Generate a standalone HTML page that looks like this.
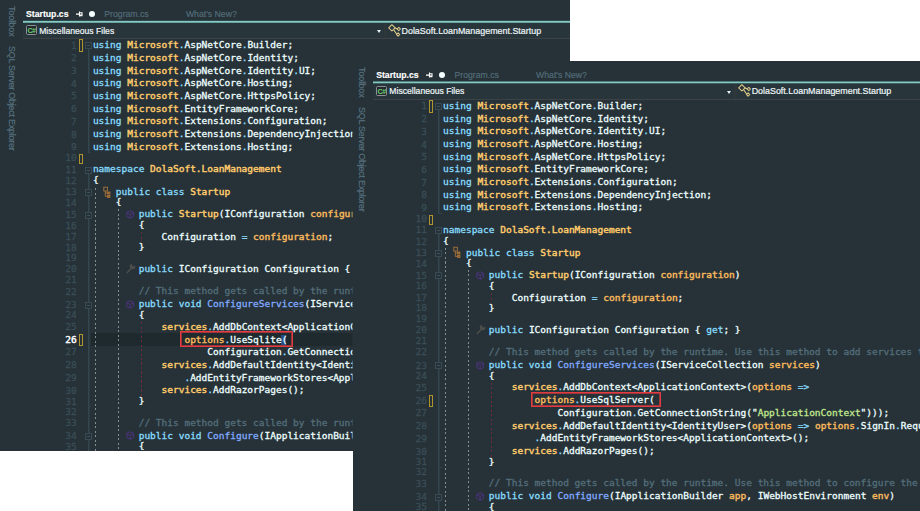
<!DOCTYPE html>
<html lang="en"><head><meta charset="utf-8"><title>Startup.cs</title>
<style>
html,body{margin:0;padding:0}
body{width:920px;height:511px;background:#fff;position:relative;overflow:hidden;font-family:"Liberation Sans",sans-serif}
.pane{position:absolute;background:#263238;overflow:hidden}
.pane>*{position:absolute}
.vt{left:0;width:0;height:0;color:#587280;-webkit-text-stroke:0.15px;font-size:9px;white-space:nowrap;transform:translate(6.5px,0) rotate(90deg);transform-origin:0 0;line-height:9px;margin-top:0}
.vt{transform:translate(16px,0) rotate(90deg);font-size:8.9px}
.tab{-webkit-text-stroke:0.15px;top:8.5px;font-size:8.7px;line-height:11px;color:#546e7a;white-space:nowrap}
.tab.act{color:#fff;font-weight:bold;font-size:8.7px;-webkit-text-stroke:0.15px}
.dot{width:6.2px;height:6.2px;border-radius:50%;background:#f4ffff}
.teal3{position:absolute;height:3px;background:linear-gradient(to bottom,rgba(128,203,196,var(--a)) 0,rgba(128,203,196,var(--a)) 1px,#80cbc4 1px,#80cbc4 2px,rgba(128,203,196,var(--b)) 2px,rgba(128,203,196,var(--b)) 3px)}
.nav{height:15px;background:#28353b;border-bottom:1px solid #3c4246;box-sizing:content-box}
.cs{width:9px;height:7.8px;border:1px solid #8b9194;border-radius:1.5px;background:#23292d;box-sizing:content-box}
.cs span{position:absolute;left:0.4px;top:1px;font:bold 7.2px "Liberation Sans",sans-serif;color:#6fd274;line-height:8px;letter-spacing:-0.5px}
.navt{-webkit-text-stroke:0.2px;top:25.5px;font-size:8.6px;line-height:11px;color:#eef6f8;white-space:nowrap}
.arrow{width:0;height:0;border-left:2.6px solid transparent;border-right:2.6px solid transparent;border-top:3px solid #e8f0f2}
.sep{width:2.6px;height:15px;background:#30373b}
.cur{background:#1f2a2f}
.ol{width:2px;background:linear-gradient(to right,#34464e 0,#34464e 1px,rgba(52,70,78,.45) 1px,rgba(52,70,78,.45) 2px)}
.olh{width:3.4px;height:1px;background:#31424a}
.cb{width:5px;height:5px;border:1px solid #384b54;background:#263238;box-sizing:content-box}
.cb i{position:absolute;left:1px;top:2px;width:3px;height:1px;background:#3f535c}
.ym{width:2px;border:1px solid #b0952f;box-sizing:content-box}
.g{width:1px;background:repeating-linear-gradient(to bottom,#838d91 0,#838d91 2px,transparent 2px,transparent 4.5px)}
.g.r{background:repeating-linear-gradient(to bottom,#6e2c3a 0,#6e2c3a 2px,transparent 2px,transparent 4.5px)}
.ln,.cd{font-family:"DejaVu Sans Mono","Liberation Mono",monospace;font-size:9.5px;line-height:12px;white-space:pre;-webkit-text-stroke:0.3px}
.ln{left:40px;width:36.8px;text-align:right;color:#3a4d56}
.ln.cl{color:#fff;-webkit-text-stroke:0.45px}
.cd{left:92.9px;color:#eeffff}
.k{color:#89ddff}.t{color:#ffcb6b;-webkit-text-stroke:0.42px}.w{color:#eeffff}.p{color:#89ddff}.c{color:#546e7a}.m{color:#82aaff}.o{color:#f9b95c;-webkit-text-stroke:0.42px}.s{color:#c3e88d}
.red{border:1px solid #e23b40;box-shadow:inset 0 0 0 1px rgba(226,59,64,.65);box-sizing:border-box}
.ic{overflow:visible}
</style></head>
<body>
<div class="pane" style="left:0px;top:0px;width:570px;height:451px">
<div class="vt" style="top:6px">Toolbox</div>
<div class="vt" style="top:46.3px;letter-spacing:-0.2px">SQL Server Object Explorer</div>
<div class="tab act" style="left:26px;top:8.5px">Startup.cs</div>
<svg class="pin" style="left:76px;top:11px" width="7" height="6" viewBox="0 0 7 6"><path d="M0 3.1H3.4M3.5 0.6V5.5M3.5 1.7H6V4H3.5M3.5 4.7H6.4" fill="none" stroke="#fff" stroke-width="1.1"/></svg>
<div class="dot" style="left:89.1px;top:11.2px"></div>
<div class="tab" style="left:104.3px;top:8.5px">Program.cs</div>
<div class="tab" style="left:185.9px;top:8.5px">What's New?</div>
<div class="nav" style="left:23px;top:23px;width:547px"></div>
<div class="cs" style="left:26px;top:25px"><span>C#</span></div>
<div class="navt" style="left:39.2px">Miscellaneous Files</div>
<div class="arrow" style="left:376.6px;top:30px"></div>
<div class="sep" style="left:383.8px;top:23px"></div>
<svg class="ic" style="left:388px;top:23.5px" width="13" height="13" viewBox="0 0 13 13"><g fill="none" stroke="#e1cd8c" stroke-width="1.05" stroke-linejoin="round"><path d="M3.9 0.7L7.1 3.8L3.9 7L0.7 3.8Z"/><path d="M10.8 3.3L12.5 5L10.8 6.7L9.1 5Z"/><path d="M10.1 8.8L11.8 10.5L10.1 12.2L8.4 10.5Z"/><path d="M7.1 3.8L9.1 5M5.6 5.6L8.6 10"/></g></svg>
<div class="navt" style="left:401.5px;font-size:8.92px">DolaSoft.LoanManagement.Startup</div>
<div class="cur" style="left:91px;top:333.4px;width:479px;height:12.2px"></div>
<div style="left:281px;top:335px;width:5px;height:10px;background:#234f86"></div>
<div class="ol" style="left:88px;top:48.5px;height:104.69999999999999px"></div>
<div class="olh" style="left:88px;top:152.2px"></div>
<div class="ol" style="left:88px;top:172.5px;height:278.5px"></div>
<div class="olh" style="left:88px;top:252.6px"></div>
<div class="olh" style="left:88px;top:406px"></div>
<div class="cb" style="left:84.7px;top:42.40px"><i></i></div>
<div class="cb" style="left:84.7px;top:166.55px"><i></i></div>
<div class="cb" style="left:84.7px;top:189.20px"><i></i></div>
<div class="cb" style="left:84.7px;top:211.70px"><i></i></div>
<div class="cb" style="left:84.7px;top:301.60px"><i></i></div>
<div class="cb" style="left:84.7px;top:432.90px"><i></i></div>
<div class="ym" style="left:79px;top:39px;height:11px"></div>
<div class="ym" style="left:79px;top:154px;height:8px"></div>
<div class="ym" style="left:79px;top:334px;height:10px"></div>
<div class="g" style="left:95px;top:187.5px;height:263.5px"></div>
<div class="g" style="left:118px;top:209px;height:242px"></div>
<div class="g r" style="left:141px;top:232px;height:10px"></div>
<div class="g r" style="left:141px;top:322px;height:74.5px"></div>
<svg class="ic" style="left:102.5px;top:186.50px" width="9" height="12" viewBox="0 0 9 12"><g fill="none" stroke="#a9743a" stroke-width="0.9"><rect x="0.8" y="0.2" width="3.6" height="3.8"/><rect x="4.6" y="5" width="2.3" height="2" fill="#8a5f30"/><rect x="4.6" y="8.4" width="2.3" height="2" fill="#8a5f30"/><path d="M2.3 4V9.4H4.6M2.3 6H4.6"/></g></svg>
<svg class="ic" style="left:125.6px;top:210.00px" width="8.2" height="9" viewBox="0 0 9 10"><g fill="none" stroke="#523288" stroke-width="1" stroke-linejoin="round"><path d="M4.5 0.8L8.2 2.8V7L4.5 9.2L0.8 7V2.8Z"/><path d="M0.8 2.8L4.5 5L8.2 2.8M4.5 5V9.2"/></g></svg>
<svg class="ic" style="left:126px;top:263.40px" width="10.4" height="10.8" viewBox="0 0 11 12"><path d="M1.2 10.6L6 5.6" stroke="#4c4e4b" stroke-width="1.7" stroke-linecap="round" fill="none"/><path d="M10 3A3.1 3.1 0 1 1 6.4 0.8L6.6 3L8.2 4Z" fill="#4c4e4b"/></svg>
<svg class="ic" style="left:125.6px;top:299.90px" width="8.2" height="9" viewBox="0 0 9 10"><g fill="none" stroke="#523288" stroke-width="1" stroke-linejoin="round"><path d="M4.5 0.8L8.2 2.8V7L4.5 9.2L0.8 7V2.8Z"/><path d="M0.8 2.8L4.5 5L8.2 2.8M4.5 5V9.2"/></g></svg>
<svg class="ic" style="left:125.6px;top:431.20px" width="8.2" height="9" viewBox="0 0 9 10"><g fill="none" stroke="#523288" stroke-width="1" stroke-linejoin="round"><path d="M4.5 0.8L8.2 2.8V7L4.5 9.2L0.8 7V2.8Z"/><path d="M0.8 2.8L4.5 5L8.2 2.8M4.5 5V9.2"/></g></svg>
<div class="ln" style="top:40.00px">1</div>
<div class="cd" style="top:39.00px"><span class="k">using</span> <span class="t">Microsoft</span><span class="p">.</span><span class="w">AspNetCore</span><span class="p">.</span><span class="w">Builder</span><span class="w">;</span></div>
<div class="ln" style="top:52.00px">2</div>
<div class="cd" style="top:52.00px"><span class="k">using</span> <span class="t">Microsoft</span><span class="p">.</span><span class="w">AspNetCore</span><span class="p">.</span><span class="w">Identity</span><span class="w">;</span></div>
<div class="ln" style="top:65.00px">3</div>
<div class="cd" style="top:65.00px"><span class="k">using</span> <span class="t">Microsoft</span><span class="p">.</span><span class="w">AspNetCore</span><span class="p">.</span><span class="w">Identity</span><span class="p">.</span><span class="w">UI</span><span class="w">;</span></div>
<div class="ln" style="top:78.00px">4</div>
<div class="cd" style="top:77.00px"><span class="k">using</span> <span class="t">Microsoft</span><span class="p">.</span><span class="w">AspNetCore</span><span class="p">.</span><span class="w">Hosting</span><span class="w">;</span></div>
<div class="ln" style="top:90.00px">5</div>
<div class="cd" style="top:90.00px"><span class="k">using</span> <span class="t">Microsoft</span><span class="p">.</span><span class="w">AspNetCore</span><span class="p">.</span><span class="w">HttpsPolicy</span><span class="w">;</span></div>
<div class="ln" style="top:103.00px">6</div>
<div class="cd" style="top:103.00px"><span class="k">using</span> <span class="t">Microsoft</span><span class="p">.</span><span class="w">EntityFrameworkCore</span><span class="w">;</span></div>
<div class="ln" style="top:116.00px">7</div>
<div class="cd" style="top:115.00px"><span class="k">using</span> <span class="t">Microsoft</span><span class="p">.</span><span class="w">Extensions</span><span class="p">.</span><span class="w">Configuration</span><span class="w">;</span></div>
<div class="ln" style="top:129.00px">8</div>
<div class="cd" style="top:128.00px"><span class="k">using</span> <span class="t">Microsoft</span><span class="p">.</span><span class="w">Extensions</span><span class="p">.</span><span class="w">DependencyInjection</span><span class="w">;</span></div>
<div class="ln" style="top:141.00px">9</div>
<div class="cd" style="top:141.00px"><span class="k">using</span> <span class="t">Microsoft</span><span class="p">.</span><span class="w">Extensions</span><span class="p">.</span><span class="w">Hosting</span><span class="w">;</span></div>
<div class="ln" style="top:152.00px">10</div>
<div class="ln" style="top:164.00px">11</div>
<div class="cd" style="top:163.00px"><span class="k">namespace</span> <span class="t">DolaSoft.LoanManagement</span></div>
<div class="ln" style="top:175.00px">12</div>
<div class="cd" style="top:174.00px"><span class="w">{</span></div>
<div class="ln" style="top:186.00px">13</div>
<div class="cd" style="top:186.00px">    <span class="k">public class</span> <span class="t">Startup</span></div>
<div class="ln" style="top:197.00px">14</div>
<div class="cd" style="top:196.00px">    <span class="w">{</span></div>
<div class="ln" style="top:209.00px">15</div>
<div class="cd" style="top:208.00px">        <span class="k">public</span> <span class="t">Startup</span><span class="w">(IConfiguration</span> <span class="o">configuration</span><span class="w">)</span></div>
<div class="ln" style="top:220.00px">16</div>
<div class="cd" style="top:219.00px">        <span class="w">{</span></div>
<div class="ln" style="top:231.00px">17</div>
<div class="cd" style="top:231.00px">            <span class="w">Configuration</span> <span class="k">=</span> <span class="o">configuration</span><span class="w">;</span></div>
<div class="ln" style="top:242.00px">18</div>
<div class="cd" style="top:241.00px">        <span class="w">}</span></div>
<div class="ln" style="top:252.00px">19</div>
<div class="ln" style="top:263.00px">20</div>
<div class="cd" style="top:263.00px">        <span class="k">public</span> <span class="w">IConfiguration Configuration {</span> <span class="k">get</span><span class="w">; }</span></div>
<div class="ln" style="top:274.00px">21</div>
<div class="ln" style="top:286.00px">22</div>
<div class="cd" style="top:285.00px">        <span class="c">// This method gets called by the runtime. Use this method to add services to the container.</span></div>
<div class="ln" style="top:299.00px">23</div>
<div class="cd" style="top:298.00px">        <span class="k">public void</span> <span class="m">ConfigureServices</span><span class="w">(IServiceCollection</span> <span class="o">services</span><span class="w">)</span></div>
<div class="ln" style="top:309.00px">24</div>
<div class="cd" style="top:309.00px">        <span class="w">{</span></div>
<div class="ln" style="top:321.00px">25</div>
<div class="cd" style="top:321.00px">            <span class="t">services</span><span class="p">.</span><span class="w">AddDbContext&lt;ApplicationContext&gt;(</span><span class="o">options</span> <span class="k">=&gt;</span></div>
<div class="ln cl" style="top:334.00px">26</div>
<div class="cd" style="top:334.00px">                <span class="o">options</span><span class="p">.</span><span class="w">UseSqlite(</span></div>
<div class="ln" style="top:346.00px">27</div>
<div class="cd" style="top:346.00px">                    <span class="w">Configuration</span><span class="p">.</span><span class="w">GetConnectionString(</span><span class="w">"</span><span class="s">ApplicationContext</span><span class="w">")));</span></div>
<div class="ln" style="top:359.00px">28</div>
<div class="cd" style="top:359.00px">            <span class="t">services</span><span class="p">.</span><span class="w">AddDefaultIdentity&lt;IdentityUser&gt;(</span><span class="o">options</span> <span class="k">=&gt;</span> <span class="o">options</span><span class="p">.</span><span class="w">SignIn</span><span class="p">.</span><span class="w">RequireConfirmedAccount</span> <span class="k">=</span> <span class="k">true</span><span class="w">)</span></div>
<div class="ln" style="top:372.00px">29</div>
<div class="cd" style="top:372.00px">                <span class="p">.</span><span class="w">AddEntityFrameworkStores&lt;ApplicationContext&gt;();</span></div>
<div class="ln" style="top:385.00px">30</div>
<div class="cd" style="top:384.00px">            <span class="t">services</span><span class="p">.</span><span class="w">AddRazorPages();</span></div>
<div class="ln" style="top:396.00px">31</div>
<div class="cd" style="top:395.00px">        <span class="w">}</span></div>
<div class="ln" style="top:406.00px">32</div>
<div class="ln" style="top:417.00px">33</div>
<div class="cd" style="top:417.00px">        <span class="c">// This method gets called by the runtime. Use this method to configure the HTTP request pipeline.</span></div>
<div class="ln" style="top:430.00px">34</div>
<div class="cd" style="top:430.00px">        <span class="k">public void</span> <span class="m">Configure</span><span class="w">(IApplicationBuilder</span> <span class="o">app</span><span class="w">, IWebHostEnvironment</span> <span class="o">env</span><span class="w">)</span></div>
<div class="ln" style="top:441.00px">35</div>
<div class="cd" style="top:440.00px">        <span class="w">{</span></div>
<div class="red" style="left:180px;top:331px;width:112.5px;height:16px"></div>
</div>
<div class="teal3" style="left:23px;top:20px;width:547px;--a:.15;--b:.75"></div>
<div style="position:absolute;left:352px;top:61px;width:1px;height:390px;background:#263238;opacity:.5"></div>
<div style="position:absolute;left:353px;top:61px;width:567px;height:450px;overflow:hidden;background:#263238">
<div class="pane" style="left:-2.85px;top:-0.25px;width:570px;height:451px">
<div class="vt" style="top:6px">Toolbox</div>
<div class="vt" style="top:46.3px;letter-spacing:-0.2px">SQL Server Object Explorer</div>
<div class="tab act" style="left:26px;top:9.1px">Startup.cs</div>
<svg class="pin" style="left:76px;top:11px" width="7" height="6" viewBox="0 0 7 6"><path d="M0 3.1H3.4M3.5 0.6V5.5M3.5 1.7H6V4H3.5M3.5 4.7H6.4" fill="none" stroke="#fff" stroke-width="1.1"/></svg>
<div class="dot" style="left:89.1px;top:11.2px"></div>
<div class="tab" style="left:104.3px;top:9.1px">Program.cs</div>
<div class="tab" style="left:185.9px;top:9.1px">What's New?</div>
<div class="nav" style="left:23px;top:23px;width:547px"></div>
<div class="cs" style="left:26px;top:25px"><span>C#</span></div>
<div class="navt" style="left:39.2px">Miscellaneous Files</div>
<div class="arrow" style="left:376.6px;top:30px"></div>
<div class="sep" style="left:383.8px;top:23px"></div>
<svg class="ic" style="left:388px;top:23.5px" width="13" height="13" viewBox="0 0 13 13"><g fill="none" stroke="#e1cd8c" stroke-width="1.05" stroke-linejoin="round"><path d="M3.9 0.7L7.1 3.8L3.9 7L0.7 3.8Z"/><path d="M10.8 3.3L12.5 5L10.8 6.7L9.1 5Z"/><path d="M10.1 8.8L11.8 10.5L10.1 12.2L8.4 10.5Z"/><path d="M7.1 3.8L9.1 5M5.6 5.6L8.6 10"/></g></svg>
<div class="navt" style="left:401.5px;font-size:8.92px">DolaSoft.LoanManagement.Startup</div>
<div class="ol" style="left:88px;top:48.5px;height:104.69999999999999px"></div>
<div class="olh" style="left:88px;top:152.2px"></div>
<div class="ol" style="left:88px;top:172.5px;height:278.5px"></div>
<div class="olh" style="left:88px;top:252.6px"></div>
<div class="olh" style="left:88px;top:406px"></div>
<div class="cb" style="left:84.7px;top:42.40px"><i></i></div>
<div class="cb" style="left:84.7px;top:166.55px"><i></i></div>
<div class="cb" style="left:84.7px;top:189.20px"><i></i></div>
<div class="cb" style="left:84.7px;top:211.70px"><i></i></div>
<div class="cb" style="left:84.7px;top:301.60px"><i></i></div>
<div class="cb" style="left:84.7px;top:432.90px"><i></i></div>
<div class="ym" style="left:79px;top:39px;height:11px"></div>
<div class="ym" style="left:79px;top:154px;height:8px"></div>
<div class="ym" style="left:79px;top:334px;height:10px"></div>
<div class="g" style="left:95px;top:187.5px;height:263.5px"></div>
<div class="g" style="left:118px;top:209px;height:242px"></div>
<div class="g r" style="left:141px;top:232px;height:10px"></div>
<div class="g r" style="left:141px;top:322px;height:74.5px"></div>
<svg class="ic" style="left:102.5px;top:186.50px" width="9" height="12" viewBox="0 0 9 12"><g fill="none" stroke="#a9743a" stroke-width="0.9"><rect x="0.8" y="0.2" width="3.6" height="3.8"/><rect x="4.6" y="5" width="2.3" height="2" fill="#8a5f30"/><rect x="4.6" y="8.4" width="2.3" height="2" fill="#8a5f30"/><path d="M2.3 4V9.4H4.6M2.3 6H4.6"/></g></svg>
<svg class="ic" style="left:125.6px;top:210.00px" width="8.2" height="9" viewBox="0 0 9 10"><g fill="none" stroke="#523288" stroke-width="1" stroke-linejoin="round"><path d="M4.5 0.8L8.2 2.8V7L4.5 9.2L0.8 7V2.8Z"/><path d="M0.8 2.8L4.5 5L8.2 2.8M4.5 5V9.2"/></g></svg>
<svg class="ic" style="left:126px;top:263.40px" width="10.4" height="10.8" viewBox="0 0 11 12"><path d="M1.2 10.6L6 5.6" stroke="#4c4e4b" stroke-width="1.7" stroke-linecap="round" fill="none"/><path d="M10 3A3.1 3.1 0 1 1 6.4 0.8L6.6 3L8.2 4Z" fill="#4c4e4b"/></svg>
<svg class="ic" style="left:125.6px;top:299.90px" width="8.2" height="9" viewBox="0 0 9 10"><g fill="none" stroke="#523288" stroke-width="1" stroke-linejoin="round"><path d="M4.5 0.8L8.2 2.8V7L4.5 9.2L0.8 7V2.8Z"/><path d="M0.8 2.8L4.5 5L8.2 2.8M4.5 5V9.2"/></g></svg>
<svg class="ic" style="left:125.6px;top:431.20px" width="8.2" height="9" viewBox="0 0 9 10"><g fill="none" stroke="#523288" stroke-width="1" stroke-linejoin="round"><path d="M4.5 0.8L8.2 2.8V7L4.5 9.2L0.8 7V2.8Z"/><path d="M0.8 2.8L4.5 5L8.2 2.8M4.5 5V9.2"/></g></svg>
<div class="ln" style="top:39.25px">1</div>
<div class="cd" style="top:39.25px"><span class="k">using</span> <span class="t">Microsoft</span><span class="p">.</span><span class="w">AspNetCore</span><span class="p">.</span><span class="w">Builder</span><span class="w">;</span></div>
<div class="ln" style="top:52.25px">2</div>
<div class="cd" style="top:52.25px"><span class="k">using</span> <span class="t">Microsoft</span><span class="p">.</span><span class="w">AspNetCore</span><span class="p">.</span><span class="w">Identity</span><span class="w">;</span></div>
<div class="ln" style="top:65.25px">3</div>
<div class="cd" style="top:64.25px"><span class="k">using</span> <span class="t">Microsoft</span><span class="p">.</span><span class="w">AspNetCore</span><span class="p">.</span><span class="w">Identity</span><span class="p">.</span><span class="w">UI</span><span class="w">;</span></div>
<div class="ln" style="top:78.25px">4</div>
<div class="cd" style="top:77.25px"><span class="k">using</span> <span class="t">Microsoft</span><span class="p">.</span><span class="w">AspNetCore</span><span class="p">.</span><span class="w">Hosting</span><span class="w">;</span></div>
<div class="ln" style="top:90.25px">5</div>
<div class="cd" style="top:90.25px"><span class="k">using</span> <span class="t">Microsoft</span><span class="p">.</span><span class="w">AspNetCore</span><span class="p">.</span><span class="w">HttpsPolicy</span><span class="w">;</span></div>
<div class="ln" style="top:103.25px">6</div>
<div class="cd" style="top:102.25px"><span class="k">using</span> <span class="t">Microsoft</span><span class="p">.</span><span class="w">EntityFrameworkCore</span><span class="w">;</span></div>
<div class="ln" style="top:116.25px">7</div>
<div class="cd" style="top:115.25px"><span class="k">using</span> <span class="t">Microsoft</span><span class="p">.</span><span class="w">Extensions</span><span class="p">.</span><span class="w">Configuration</span><span class="w">;</span></div>
<div class="ln" style="top:128.25px">8</div>
<div class="cd" style="top:128.25px"><span class="k">using</span> <span class="t">Microsoft</span><span class="p">.</span><span class="w">Extensions</span><span class="p">.</span><span class="w">DependencyInjection</span><span class="w">;</span></div>
<div class="ln" style="top:141.25px">9</div>
<div class="cd" style="top:140.25px"><span class="k">using</span> <span class="t">Microsoft</span><span class="p">.</span><span class="w">Extensions</span><span class="p">.</span><span class="w">Hosting</span><span class="w">;</span></div>
<div class="ln" style="top:152.25px">10</div>
<div class="ln" style="top:163.25px">11</div>
<div class="cd" style="top:163.25px"><span class="k">namespace</span> <span class="t">DolaSoft.LoanManagement</span></div>
<div class="ln" style="top:175.25px">12</div>
<div class="cd" style="top:174.25px"><span class="w">{</span></div>
<div class="ln" style="top:186.25px">13</div>
<div class="cd" style="top:186.25px">    <span class="k">public class</span> <span class="t">Startup</span></div>
<div class="ln" style="top:197.25px">14</div>
<div class="cd" style="top:196.25px">    <span class="w">{</span></div>
<div class="ln" style="top:209.25px">15</div>
<div class="cd" style="top:208.25px">        <span class="k">public</span> <span class="t">Startup</span><span class="w">(IConfiguration</span> <span class="o">configuration</span><span class="w">)</span></div>
<div class="ln" style="top:219.25px">16</div>
<div class="cd" style="top:219.25px">        <span class="w">{</span></div>
<div class="ln" style="top:231.25px">17</div>
<div class="cd" style="top:231.25px">            <span class="w">Configuration</span> <span class="k">=</span> <span class="o">configuration</span><span class="w">;</span></div>
<div class="ln" style="top:241.25px">18</div>
<div class="cd" style="top:241.25px">        <span class="w">}</span></div>
<div class="ln" style="top:252.25px">19</div>
<div class="ln" style="top:263.25px">20</div>
<div class="cd" style="top:263.25px">        <span class="k">public</span> <span class="w">IConfiguration Configuration {</span> <span class="k">get</span><span class="w">; }</span></div>
<div class="ln" style="top:274.25px">21</div>
<div class="ln" style="top:285.25px">22</div>
<div class="cd" style="top:285.25px">        <span class="c">// This method gets called by the runtime. Use this method to add services to the container.</span></div>
<div class="ln" style="top:299.25px">23</div>
<div class="cd" style="top:298.25px">        <span class="k">public void</span> <span class="m">ConfigureServices</span><span class="w">(IServiceCollection</span> <span class="o">services</span><span class="w">)</span></div>
<div class="ln" style="top:309.25px">24</div>
<div class="cd" style="top:309.25px">        <span class="w">{</span></div>
<div class="ln" style="top:321.25px">25</div>
<div class="cd" style="top:320.25px">            <span class="t">services</span><span class="p">.</span><span class="w">AddDbContext&lt;ApplicationContext&gt;(</span><span class="o">options</span> <span class="k">=&gt;</span></div>
<div class="ln" style="top:334.25px">26</div>
<div class="cd" style="top:333.25px">                <span class="o">options</span><span class="p">.</span><span class="w">UseSqlServer(</span></div>
<div class="ln" style="top:346.25px">27</div>
<div class="cd" style="top:346.25px">                    <span class="w">Configuration</span><span class="p">.</span><span class="w">GetConnectionString(</span><span class="w">"</span><span class="s">ApplicationContext</span><span class="w">")));</span></div>
<div class="ln" style="top:359.25px">28</div>
<div class="cd" style="top:359.25px">            <span class="t">services</span><span class="p">.</span><span class="w">AddDefaultIdentity&lt;IdentityUser&gt;(</span><span class="o">options</span> <span class="k">=&gt;</span> <span class="o">options</span><span class="p">.</span><span class="w">SignIn</span><span class="p">.</span><span class="w">RequireConfirmedAccount</span> <span class="k">=</span> <span class="k">true</span><span class="w">)</span></div>
<div class="ln" style="top:372.25px">29</div>
<div class="cd" style="top:371.25px">                <span class="p">.</span><span class="w">AddEntityFrameworkStores&lt;ApplicationContext&gt;();</span></div>
<div class="ln" style="top:385.25px">30</div>
<div class="cd" style="top:384.25px">            <span class="t">services</span><span class="p">.</span><span class="w">AddRazorPages();</span></div>
<div class="ln" style="top:395.25px">31</div>
<div class="cd" style="top:395.25px">        <span class="w">}</span></div>
<div class="ln" style="top:405.25px">32</div>
<div class="ln" style="top:417.25px">33</div>
<div class="cd" style="top:416.25px">        <span class="c">// This method gets called by the runtime. Use this method to configure the HTTP request pipeline.</span></div>
<div class="ln" style="top:430.25px">34</div>
<div class="cd" style="top:429.25px">        <span class="k">public void</span> <span class="m">Configure</span><span class="w">(IApplicationBuilder</span> <span class="o">app</span><span class="w">, IWebHostEnvironment</span> <span class="o">env</span><span class="w">)</span></div>
<div class="ln" style="top:440.25px">35</div>
<div class="cd" style="top:440.25px">        <span class="w">{</span></div>
<div class="red" style="left:180.6px;top:331.4px;width:130px;height:15.2px"></div>
</div>
</div>
<div class="teal3" style="left:373px;top:81px;width:547px;--a:.5;--b:.3"></div>
</body></html>
